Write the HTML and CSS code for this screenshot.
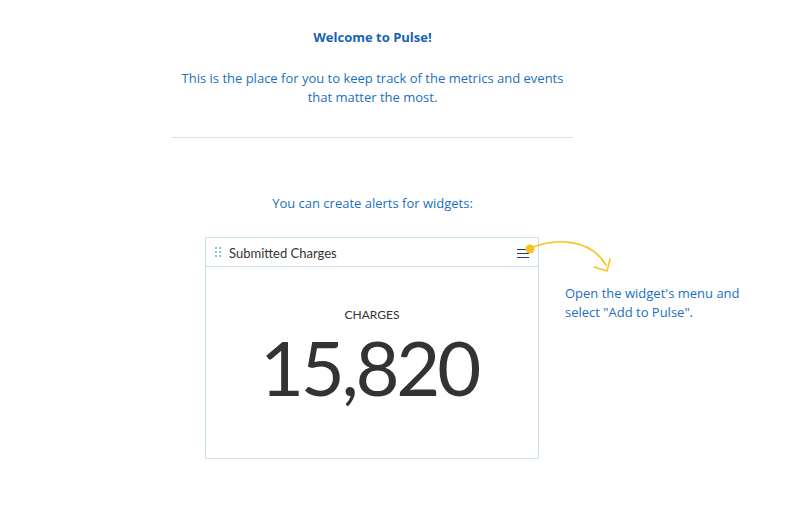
FILE: index.html
```html
<!DOCTYPE html>
<html>
<head>
<meta charset="utf-8">
<link rel="stylesheet" href="styles.css">
</head>
<body>
<main class="intro">
  <h1 class="title">Welcome to Pulse!</h1>
  <p class="lead">This is the place for you to keep track of the metrics and events that matter the most.</p>
  <hr class="divider">
  <p class="hint">You can create alerts for widgets:</p>
  <div class="demo">
    <section class="widget">
      <header class="widget-head">
        <span class="grip"><i></i><i></i><i></i><i></i><i></i><i></i></span>
        <span class="widget-title">Submitted Charges</span>
        <span class="menu"><i></i><i></i><i></i></span>
      </header>
      <div class="widget-body">
        <div class="kpi-label">CHARGES</div>
        <div class="kpi-value">15,820</div>
      </div>
    </section>
    <p class="note">Open the widget's menu and select "Add to Pulse".</p>
    <svg class="arrow" width="100" height="45" viewBox="0 0 100 45">
      <circle cx="5" cy="13" r="4.5" fill="#f9c31b"/>
      <path d="M6 12 C 30 2, 65 2, 81 29" fill="none" stroke="#f9c31b" stroke-width="1.6" stroke-linecap="round"/>
      <path d="M69 31 L82 35 L85 23" fill="none" stroke="#f9c31b" stroke-width="1.6" stroke-linecap="round" stroke-linejoin="round"/>
    </svg>
  </div>
</main>
</body>
</html>
```

FILE: styles.css
```css
html, body {
  margin: 0;
  padding: 0;
  background: #ffffff;
}
body {
  font-family: "Open Sans", "Noto Sans", sans-serif;
  color: #1b6fc2;
}
.intro {
  width: 401px;
  margin-left: 172px;
  padding-top: 28px;
  display: flex;
  flex-direction: column;
  align-items: center;
}
.title {
  margin: 0;
  font-size: 13px;
  line-height: 19px;
  font-weight: 700;
  color: #1763b3;
}
.lead {
  margin: 22px 0 0;
  font-size: 13px;
  line-height: 19px;
  text-align: center;
  width: 401px;
}
.divider {
  align-self: stretch;
  margin: 30px 0 0;
  border: 0;
  border-top: 1px solid #cfe2ee;
  height: 0;
}
.hint {
  margin: 56px 0 0;
  font-size: 13px;
  line-height: 19px;
}
.demo {
  position: relative;
  align-self: stretch;
  display: flex;
  margin-top: 24px;
  padding-left: 33px;
}
.widget {
  flex: none;
  width: 332px;
  height: 220px;
  border: 1px solid #c9e0ee;
  display: flex;
  flex-direction: column;
  font-family: "Lato", "Open Sans", sans-serif;
  color: #333333;
}
.widget-head {
  height: 28px;
  border-bottom: 1px solid #c9e0ee;
  display: flex;
  align-items: center;
  padding: 0 9px 0 9px;
}
.grip {
  display: grid;
  grid-template-columns: 2px 2px;
  grid-template-rows: 2px 2px 2px;
  gap: 2px 2px;
  margin-right: 8px;
}
.grip i {
  display: block;
  width: 2px;
  height: 2px;
  background: #8fc0e0;
}
.widget-title {
  font-size: 13px;
  flex: 1;
  color: #333;
  padding-top: 2px;
}
.menu {
  display: flex;
  flex-direction: column;
  gap: 3px;
  width: 12px;
  margin-top: 3px;
}
.menu i {
  display: block;
  height: 1px;
  background: #1a3e7a;
}
.widget-body {
  flex: 1;
  display: flex;
  flex-direction: column;
  align-items: center;
  padding-top: 42px;
}
.kpi-label {
  font-size: 12px;
  line-height: 12px;
  color: #333;
}
.kpi-value {
  font-size: 76px;
  line-height: 84px;
  margin-top: 4px;
  letter-spacing: -3.3px;
  margin-right: 6px;
  color: #333;
}
.note {
  flex: none;
  margin: 47px 0 0 26px;
  width: 200px;
  font-size: 13px;
  line-height: 19px;
}
.arrow {
  position: absolute;
  left: 353px;
  top: -1px;
}
```
